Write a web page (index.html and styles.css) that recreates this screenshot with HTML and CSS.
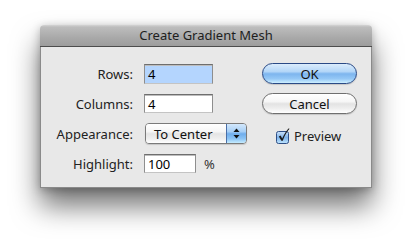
FILE: index.html
```html
<!DOCTYPE html>
<html lang="en">
<head>
    <meta charset="UTF-8">
    <title>Create Gradient Mesh</title>
    <link rel="stylesheet" href="styles.css">
</head>
<body>
    <!-- Dialog window -->
    <div class="dialog">
        <div class="title-bar">Create Gradient Mesh</div>

        <div class="dialog-body">
            <!-- Row 1 -->
            <label class="field-label">Rows:</label>
            <div class="field-cell">
                <span class="text-field wide selected">4</span>
            </div>
            <div class="button-cell">
                <span class="push-button default">OK</span>
            </div>

            <!-- Row 2 -->
            <label class="field-label">Columns:</label>
            <div class="field-cell">
                <span class="text-field wide">4</span>
            </div>
            <div class="button-cell">
                <span class="push-button">Cancel</span>
            </div>

            <!-- Row 3 -->
            <label class="field-label">Appearance:</label>
            <div class="field-cell">
                <span class="popup">
                    <span class="popup-value">To Center</span>
                    <span class="popup-arrows">
                        <svg width="7" height="11" viewBox="0 0 7 11">
                            <path d="M3.5 0.5 L6.5 4 L0.5 4 Z" fill="#111"/>
                            <path d="M3.5 10.5 L6.5 7 L0.5 7 Z" fill="#111"/>
                        </svg>
                    </span>
                </span>
            </div>
            <div class="button-cell check-cell">
                <span class="checkbox">
                    <svg width="16" height="17" viewBox="0 0 16 17">
                        <defs>
                            <linearGradient id="cbfill" x1="0" y1="0" x2="0" y2="1">
                                <stop offset="0" stop-color="#cfe4fa"/>
                                <stop offset="0.5" stop-color="#7fb3ea"/>
                                <stop offset="1" stop-color="#bfe6ff"/>
                            </linearGradient>
                        </defs>
                        <rect x="0.5" y="3.5" width="12" height="12" rx="2" fill="url(#cbfill)" stroke="#2f4f86"/>
                        <path d="M2.8 8.5 L5.4 12.8 L6.8 12.8 C8.4 8.2 10.6 3.8 13.6 0.8 L12.4 0.4 C10 3 8 6.6 6.2 10.4 L4.6 7.6 Z" fill="#1a1a1a"/>
                    </svg>
                </span>
                <span class="check-label">Preview</span>
            </div>

            <!-- Row 4 -->
            <label class="field-label">Highlight:</label>
            <div class="field-cell">
                <span class="text-field narrow">100</span>
                <span class="unit">%</span>
            </div>
            <div class="button-cell"></div>
        </div>
    </div>
</body>
</html>
```

FILE: styles.css
```css
html {
    height: 100%;
    background-color: #ffffff;
}

body {
    margin: 0;
    padding: 25px 0 0 40px;
    min-height: 244px;
    box-sizing: border-box;
    background-color: #ffffff;
    font-family: "Noto Sans", "DejaVu Sans", sans-serif;
    font-size: 13px;
    color: #222222;
}

.dialog {
    width: 332px;
    border-radius: 4px 4px 0 0;
    box-shadow: 0 18px 28px rgba(0, 0, 0, 0.55), 0 2px 8px rgba(0, 0, 0, 0.25);
}

.title-bar {
    height: 21px;
    line-height: 21px;
    text-align: center;
    color: #1e1e1e;
    border-radius: 4px 4px 0 0;
    border-bottom: 1px solid #4c4c4c;
    background: linear-gradient(#d4d4d4 0%, #bdbdbd 10%, #a9a9a9 60%, #9c9c9c 100%);
}

.dialog-body {
    display: grid;
    grid-template-columns: 92px 107px 95px;
    grid-auto-rows: 21px;
    column-gap: 11px;
    row-gap: 9px;
    height: 124px;
    padding: 16px 0 0 0;
    background-color: #e8e8e8;
    border: 1px solid #8a8a8a;
    border-top: none;
}

.field-label {
    display: flex;
    align-items: center;
    justify-content: flex-end;
    color: #222222;
}

.field-cell {
    display: flex;
    align-items: center;
}

.text-field {
    display: flex;
    align-items: center;
    height: 17px;
    padding-left: 3px;
    background-color: #ffffff;
    border: 1px solid #8e8e8e;
    border-top-color: #6e6e6e;
    border-bottom-color: #c4c4c4;
    color: #000000;
    box-shadow: inset 0 1px 0 #bdbdbd;
}

.text-field.wide {
    width: 64px;
}

.text-field.narrow {
    width: 47px;
}

.text-field.selected {
    background-color: #b4d5fe;
    height: 18px;
}

.unit {
    margin-left: 8px;
    color: #333333;
}

.button-cell {
    display: flex;
    align-items: center;
}

.push-button {
    display: flex;
    align-items: center;
    justify-content: center;
    box-sizing: border-box;
    width: 95px;
    height: 21px;
    border-radius: 11px;
    border: 1px solid #6f6f6f;
    color: #111111;
    background: linear-gradient(#ffffff 0%, #f6f6f6 40%, #e3e3e3 52%, #eeeeee 75%, #ffffff 100%);
    box-shadow: 0 1px 1px rgba(0, 0, 0, 0.15);
}

.push-button.default {
    border-color: #2a4a86;
    background: linear-gradient(#dbecfc 0%, #b3d6f8 40%, #7db5ee 52%, #95c8f6 78%, #cdefff 100%);
}

.popup {
    display: flex;
    box-sizing: border-box;
    width: 102px;
    height: 21px;
    margin-left: 1px;
    border: 1px solid #7a7a7a;
    border-radius: 4px;
    overflow: hidden;
    box-shadow: 0 1px 1px rgba(0, 0, 0, 0.15);
}

.popup-value {
    flex-grow: 1;
    display: flex;
    align-items: center;
    padding-left: 8px;
    color: #111111;
    background: linear-gradient(#ffffff 0%, #f6f6f6 40%, #e4e4e4 52%, #efefef 78%, #ffffff 100%);
}

.popup-arrows {
    display: flex;
    align-items: center;
    justify-content: center;
    width: 19px;
    border-left: 1px solid #4a6fa8;
    background: linear-gradient(#d3e8fc 0%, #a7cff6 40%, #6fadec 52%, #8cc4f5 78%, #c6ecff 100%);
}

.check-cell {
    align-items: flex-end;
    padding-left: 14px;
}

.checkbox {
    display: flex;
    height: 17px;
    margin-bottom: -1px;
}

.check-label {
    margin-left: 2px;
    line-height: 16px;
    color: #222222;
}
```
